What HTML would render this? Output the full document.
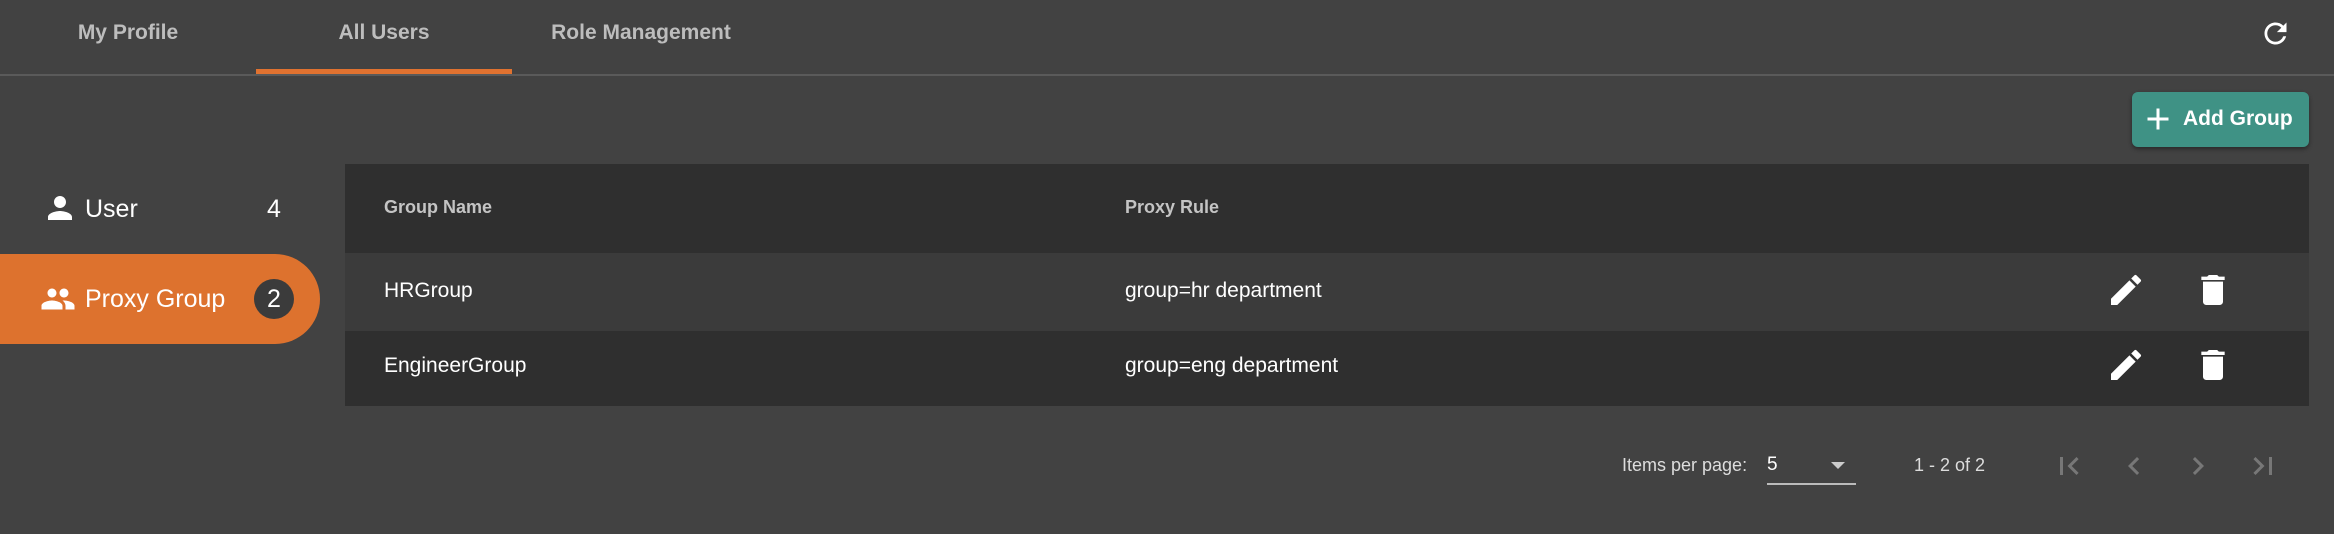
<!DOCTYPE html>
<html><head><meta charset="utf-8"><style>
*{margin:0;padding:0;box-sizing:border-box}
body{width:2334px;height:534px;background:#424242;font-family:"Liberation Sans",sans-serif;position:relative;overflow:hidden;color:#fff}
.a{position:absolute}
.tab{position:absolute;top:0;height:72px;width:256px;text-align:center;line-height:66px;font-size:21px;font-weight:bold;color:#bdbdbd}
.hdr{font-size:18px;font-weight:bold;color:#c4c4c4}
.cell{font-size:21px;color:#fff}
svg{position:absolute}
</style></head><body>
<div class="tab" style="left:0">My Profile</div>
<div class="tab" style="left:256px">All Users</div>
<div class="tab" style="left:513px">Role Management</div>
<div class="a" style="left:256px;top:69px;width:256px;height:5px;background:#e07230"></div>
<div class="a" style="left:0;top:74px;width:2334px;height:2px;background:#5a5a5a"></div>
<svg style="left:2259px;top:17px" width="33" height="33" viewBox="0 0 24 24"><path fill="#fff" d="M17.65 6.35A7.958 7.958 0 0 0 12 4c-4.42 0-7.99 3.58-7.99 8s3.57 8 7.99 8c3.730 0 6.84-2.55 7.73-6h-2.08A5.99 5.99 0 0 1 12 18c-3.31 0-6-2.69-6-6s2.690-6 6-6c1.66 0 3.14.69 4.22 1.78L13 11h7V4l-2.35 2.35z"/></svg>

<div class="a" style="left:2132px;top:92px;width:177px;height:55px;background:#3f9285;border-radius:6px;box-shadow:0 2px 4px rgba(0,0,0,.4)"></div>
<svg style="left:2140px;top:101px" width="36" height="36" viewBox="0 0 24 24"><path fill="#fff" d="M19 13h-6v6h-2v-6H5v-2h6V5h2v6h6v2z"/></svg>
<div class="a" style="left:2183px;top:104px;font-size:21px;font-weight:bold;line-height:30px">Add Group</div>

<div class="a" style="left:345px;top:164px;width:1964px;height:89px;background:#2f2f2f"></div>
<div class="a" style="left:345px;top:253px;width:1964px;height:78px;background:#3b3b3b"></div>
<div class="a" style="left:345px;top:331px;width:1964px;height:75px;background:#2f2f2f"></div>
<div class="a hdr" style="left:384px;top:197px">Group Name</div>
<div class="a hdr" style="left:1125px;top:197px">Proxy Rule</div>
<div class="a cell" style="left:384px;top:279px">HRGroup</div>
<div class="a cell" style="left:1125px;top:279px">group=hr department</div>
<div class="a cell" style="left:384px;top:354px">EngineerGroup</div>
<div class="a cell" style="left:1125px;top:354px">group=eng department</div>
<svg style="left:2106px;top:270px" width="40" height="40" viewBox="0 0 24 24"><path fill="#fff" d="M3 17.25V21h3.75L17.81 9.94l-3.75-3.75L3 17.25zM20.71 7.04a1 1 0 0 0 0-1.41l-2.34-2.34a1 1 0 0 0-1.41 0l-1.83 1.83 3.75 3.75 1.83-1.83z"/></svg>
<svg style="left:2193px;top:270px" width="40" height="40" viewBox="0 0 24 24"><path fill="#fff" d="M6 19c0 1.1.9 2 2 2h8c1.1 0 2-.9 2-2V7H6v12zM19 4h-3.5l-1-1h-5l-1 1H5v2h14V4z"/></svg>
<svg style="left:2106px;top:345px" width="40" height="40" viewBox="0 0 24 24"><path fill="#fff" d="M3 17.25V21h3.75L17.81 9.94l-3.75-3.75L3 17.25zM20.71 7.04a1 1 0 0 0 0-1.41l-2.34-2.34a1 1 0 0 0-1.41 0l-1.83 1.83 3.75 3.75 1.83-1.83z"/></svg>
<svg style="left:2193px;top:345px" width="40" height="40" viewBox="0 0 24 24"><path fill="#fff" d="M6 19c0 1.1.9 2 2 2h8c1.1 0 2-.9 2-2V7H6v12zM19 4h-3.5l-1-1h-5l-1 1H5v2h14V4z"/></svg>

<svg style="left:42px;top:190px" width="36" height="36" viewBox="0 0 24 24"><path fill="#fff" d="M12 12c2.21 0 4-1.790 4-4s-1.79-4-4-4-4 1.79-4 4 1.79 4 4 4zm0 2c-2.67 0-8 1.34-8 4v2h16v-2c0-2.66-5.33-4-8-4z"/></svg>
<div class="a" style="left:85px;top:195px;font-size:25px">User</div>
<div class="a" style="left:267px;top:195px;font-size:25px">4</div>
<div class="a" style="left:0;top:254px;width:320px;height:90px;background:#dd722e;border-radius:0 45px 45px 0"></div>
<svg style="left:40px;top:281px" width="36" height="36" viewBox="0 0 24 24"><path fill="#fff" d="M16 11c1.66 0 2.99-1.34 2.99-3S17.66 5 16 5c-1.66 0-3 1.34-3 3s1.34 3 3 3zm-8 0c1.66 0 2.99-1.34 2.99-3S9.66 5 8 5C6.34 5 5 6.34 5 8s1.34 3 3 3zm0 2c-2.33 0-7 1.17-7 3.5V19h14v-2.5c0-2.33-4.67-3.5-7-3.5zm8 0c-.29 0-.62.02-.97.05 1.16.84 1.97 1.97 1.97 3.45V19h6v-2.5c0-2.33-4.67-3.5-7-3.5z"/></svg>
<div class="a" style="left:85px;top:285px;font-size:25px">Proxy Group</div>
<div class="a" style="left:254px;top:279px;width:40px;height:40px;border-radius:50%;background:#3b3b3b;text-align:center;line-height:40px;font-size:25px">2</div>

<div class="a" style="left:1622px;top:455px;font-size:18px;color:#ddd">Items per page:</div>
<div class="a" style="left:1767px;top:454px;font-size:19px">5</div>
<div class="a" style="left:1831px;top:462px;width:0;height:0;border-left:7px solid transparent;border-right:7px solid transparent;border-top:7px solid #ccc"></div>
<div class="a" style="left:1767px;top:483px;width:89px;height:2px;background:#bbb"></div>
<div class="a" style="left:1914px;top:455px;font-size:18px;color:#ddd">1 - 2 of 2</div>
<svg style="left:2051px;top:448px" width="36" height="36" viewBox="0 0 24 24"><path fill="#777" d="M18.41 16.59L13.82 12l4.59-4.59L17 6l-6 6 6 6zM6 6h2v12H6z"/></svg>
<svg style="left:2116px;top:448px" width="36" height="36" viewBox="0 0 24 24"><path fill="#777" d="M15.41 7.41L14 6l-6 6 6 6 1.41-1.41L10.83 12z"/></svg>
<svg style="left:2180px;top:448px" width="36" height="36" viewBox="0 0 24 24"><path fill="#777" d="M10 6L8.59 7.41 13.17 12l-4.58 4.59L10 18l6-6z"/></svg>
<svg style="left:2245px;top:448px" width="36" height="36" viewBox="0 0 24 24"><path fill="#777" d="M5.59 7.41L10.18 12l-4.59 4.59L7 18l6-6-6-6zM16 6h2v12h-2z"/></svg>
</body></html>
